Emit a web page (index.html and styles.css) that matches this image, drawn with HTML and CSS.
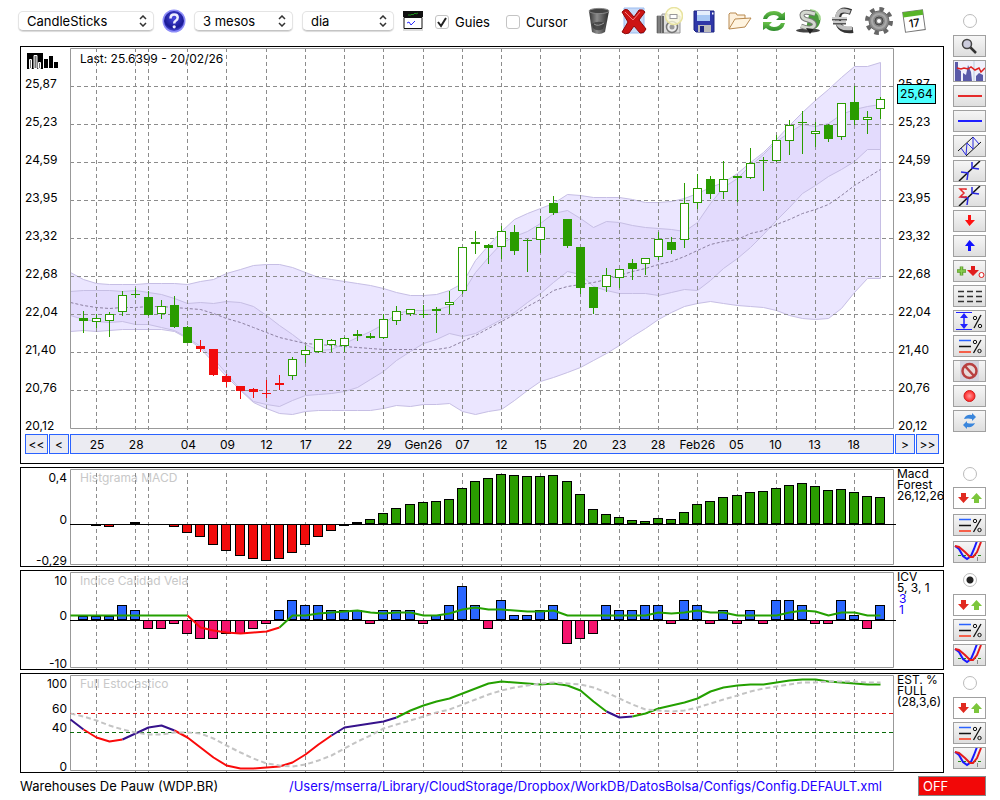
FILE: index.html
```html
<!DOCTYPE html>
<html lang="ca">
<head>
  <meta charset="UTF-8" />
  <meta name="viewport" content="width=device-width, initial-scale=1.0">
  <title>Warehouses De Pauw (WDP.BR)</title>
  <link rel="stylesheet" href="styles.css">
</head>
<body>
  <!-- Shared icons -->
  <svg class="defs" width="0" height="0" aria-hidden="true">
    <defs>
      <linearGradient id="metal" x1="0" x2="1"><stop offset="0" stop-color="#333"/><stop offset=".4" stop-color="#8c8c8c"/><stop offset="1" stop-color="#2a2a2a"/></linearGradient>
      <linearGradient id="leaf" x1="0" x2="0" y1="0" y2="1"><stop offset="0" stop-color="#6cc24a"/><stop offset="1" stop-color="#2c8a2c"/></linearGradient>
      <radialGradient id="ball" cx=".5" cy=".35" r=".7"><stop offset="0" stop-color="#4a4ae0"/><stop offset=".7" stop-color="#1a1a96"/><stop offset="1" stop-color="#5b5bf0"/></radialGradient>
      <radialGradient id="redball"><stop offset="0" stop-color="#ff9a9a"/><stop offset="1" stop-color="#f22"/></radialGradient>
      <symbol id="i-updown" viewBox="0 0 31 20">
        <rect width="31" height="20" fill="#fff"/>
        <path d="M7 5h5v4h3l-5.500 6L4 9h3z" fill="#e02a20"/>
        <path d="M20 15h5v-4h3l-5.500-6L17 11h3z" fill="#7cc63c"/>
      </symbol>
      <symbol id="i-percent" viewBox="0 0 31 20">
        <path d="M5 4.500h12" stroke="#2a62ff" stroke-width="1.500"/>
        <path d="M5 10.500h12" stroke="#111" stroke-width="1.500"/>
        <path d="M5 16h12" stroke="#f5604a" stroke-width="2"/>
        <path d="M27 4L19.500 17" stroke="#111" stroke-width="1.300"/>
        <circle cx="21" cy="6" r="1.700" fill="none" stroke="#111"/><circle cx="25.500" cy="15" r="1.700" fill="none" stroke="#111"/>
      </symbol>
      <symbol id="i-curves" viewBox="0 0 31 20">
        <path d="M4 13.500h25" stroke="#2c8a1c" stroke-dasharray="3 2"/>
        <path d="M23.500 15v4" stroke="#888"/>
        <path d="M1 4l4 3 4 7 4 3 4-3 3-7 3-8" fill="none" stroke="#1a1aff" stroke-width="2"/>
        <path d="M1 4l4 1 6 5 5 5h3l4-5 4-10" fill="none" stroke="#e51c1c" stroke-width="2"/>
      </symbol>
      <symbol id="i-cross" viewBox="0 0 31 20">
        <path d="M5 20L26 0" stroke="#111" stroke-width="1.500"/>
        <path d="M7 11l7 1-1 7M18 1v6l7 1" fill="none" stroke="#2a2ae0" stroke-width="1.500"/>
      </symbol>
    </defs>
  </svg>

  <div class="page">
    <header class="toolbar">
      <select class="pick pick-type" aria-label="Tipus"><option>CandleSticks</option></select>
      <button class="icon-button help" title="Ajuda">
        <svg viewBox="0 0 24 24"><circle cx="12" cy="12" r="11.500" fill="#8c8cf8"/><circle cx="12" cy="12" r="10" fill="url(#ball)"/><path d="M8.500 9.500q0-4 3.700-4 3.500 0 3.500 3 0 2-2 3.200-1.500.9-1.500 2.800" fill="none" stroke="#eef" stroke-width="2.500"/><circle cx="12.200" cy="17.800" r="1.600" fill="#eef"/></svg>
      </button>
      <select class="pick pick-range" aria-label="Rang"><option>3 mesos</option></select>
      <select class="pick pick-step" aria-label="Interval"><option>dia</option></select>
      <button class="icon-button mini" title="Indicadors">
        <svg viewBox="0 0 20 20"><path d="M0 0h20v6H0z" fill="#111"/><path d="M5 4h3l1-1 1 1 2-2 1 1 2-1" fill="none" stroke="#1c8a1c"/><path d="M1 6.500h18v11H1z" fill="#fff" stroke="#111"/><path d="M4 12l2-1 2 3 4-4" fill="none" stroke="#2a2aff"/><path d="M0 19h20" stroke="#bbb"/></svg>
      </button>
      <div class="checks">
        <label class="check"><input type="checkbox" checked>Guies</label>
        <label class="check"><input type="checkbox">Cursor</label>
      </div>
      <div class="actions">
        <button class="icon-button" title="Esborrar">
          <svg viewBox="0 0 28 28"><path d="M4 4l3 21q7 4 13 0l4-21z" fill="url(#metal)"/><ellipse cx="14" cy="4" rx="10" ry="2.600" fill="#444" stroke="#888"/><path d="M7 17q5-4 13-1l-2 6q-6 3-10-1z" fill="#333" opacity=".7"/><path d="M9 17q4 3 10-1" fill="none" stroke="#999"/></svg>
        </button>
        <button class="icon-button" title="Eliminar">
          <svg viewBox="0 0 28 28"><path d="M4 1h20v25H4z" fill="#c6daf8" stroke="#9bbcf0"/><path d="M2 5q3-4 6-2l6 7 5-7q4-1 6 2l-6 8 7 9q-2 5-6 4l-6-7-5 7q-4 2-7-1l6-10z" fill="#cc1414" stroke="#8e0808"/><path d="M5 5l8 8 7-8" fill="none" stroke="#f47a7a"/></svg>
        </button>
        <button class="icon-button" title="Captura">
          <svg viewBox="0 0 28 28"><path d="M2 9h5v-2h6v2h12v17H2z" fill="#ddd" stroke="#999"/><path d="M2 9h7v17H2z" fill="#666"/><path d="M4 9v17M6.500 9v17" stroke="#999"/><circle cx="17" cy="20" r="5.500" fill="#eee" stroke="#777" stroke-width="1.500"/><circle cx="17" cy="20" r="2.500" fill="#999"/><circle cx="19" cy="9" r="8.500" fill="#fffde0" fill-opacity=".75" stroke="#e8e3a0" stroke-width="1.500"/><rect x="15" y="7.500" width="7" height="4" fill="#fff" stroke="#999"/></svg>
        </button>
        <button class="icon-button" title="Desar">
          <svg viewBox="0 0 28 28"><path d="M4 4h20v21H6l-2-2z" fill="#2f37a8" stroke="#1c2480"/><path d="M7 4h13v10H7z" fill="#e4eefc"/><path d="M7 8h13v6H7z" fill="#a8c8f4"/><path d="M8 18h13v7H8z" fill="#bbb"/><path d="M10 19h4v6h-4z" fill="#1c2480"/><path d="M22 5.500h1.500v2H22z" fill="#fff"/></svg>
        </button>
        <button class="icon-button" title="Obrir">
          <svg viewBox="0 0 28 28"><path d="M4 22V7l1-1h6l1 2h8v4" fill="#fdf0dc" stroke="#b98a50"/><path d="M4 22l6-10 16-1-6 9z" fill="#fff4e0" stroke="#b98a50"/></svg>
        </button>
        <button class="icon-button" title="Refrescar">
          <svg viewBox="0 0 28 28"><path d="M3 12q2-8 11-8 5 0 8 3l3-2v8h-9l3-3q-2-2-5-2-5 0-7 4z" fill="url(#leaf)"/><path d="M25 16q-2 8-11 8-5 0-8-3l-3 2v-8h9l-3 3q2 2 5 2 5 0 7-4z" fill="url(#leaf)"/></svg>
        </button>
        <button class="icon-button" title="Dividends">
          <svg viewBox="0 0 28 28"><ellipse cx="13" cy="23.500" rx="12" ry="2" fill="#444"/><path d="M15 3a10 10 0 1 1-4 19z" fill="#4a9a3c"/><path d="M15 3q10 1 10 10" fill="none" stroke="#a4d890" stroke-width="2"/><path d="M20 7q-12-4-13 1 0 4 6 5 8 2 6 6-3 4-13 0" fill="none" stroke="#777" stroke-width="5"/><path d="M20 7q-12-4-13 1 0 4 6 5 8 2 6 6-3 4-13 0" fill="none" stroke="#d4d8d0" stroke-width="3"/><path d="M11 21l4 6 4-5" fill="#222"/></svg>
        </button>
        <button class="icon-button" title="Divisa">
          <svg viewBox="0 0 28 28"><path d="M21 5Q8 0 8 13q1 12 15 10" fill="none" stroke="#333" stroke-width="6"/><path d="M20 5Q7 0 7 12q0 11 15 9" fill="none" stroke="#c0c0c0" stroke-width="4"/><path d="M2 12h15M3 16h13" stroke="#555" stroke-width="3"/><path d="M2 11h15M3 15h13" stroke="#ccc" stroke-width="2"/></svg>
        </button>
        <button class="icon-button" title="Configuració">
          <svg viewBox="0 0 28 28"><circle cx="14" cy="14" r="12" fill="none" stroke="#666" stroke-width="4" stroke-dasharray="4.500 4.925"/><circle cx="14" cy="14" r="10" fill="#8a8a8a" stroke="#666"/><circle cx="14" cy="14" r="7" fill="none" stroke="#a8a8a8" stroke-width="2"/><circle cx="14" cy="14" r="4" fill="#777" stroke="#444"/><circle cx="14" cy="14" r="2" fill="#fff"/></svg>
        </button>
        <button class="icon-button" title="Calendari">
          <svg viewBox="0 0 28 28"><g transform="rotate(-8 14 14)"><path d="M4 4h20v20H4z" fill="#fff" stroke="#777"/><path d="M4 4h20v5H4z" fill="#58b428"/><text class="cal-day" x="14" y="20" text-anchor="middle">17</text></g></svg>
        </button>
      </div>
    </header>

    <aside class="tools tools-main">
      <input class="dot" type="radio" name="panel" aria-label="Gràfic">
      <button class="tool" title="Zoom"><svg viewBox="0 0 31 20"><path d="M16 11l6 6" stroke="#333" stroke-width="2.500"/><circle cx="13" cy="8" r="4.500" fill="#ccd" stroke="#444" stroke-width="1.500"/></svg></button>
      <button class="tool" title="Perfil"><svg viewBox="0 0 31 20"><path d="M0 0h31v20H0z" fill="#f0f0fb"/><path d="M1 20V1h3v7l3 2v10zM9 20V12l3 2 2-10 3 7 1 9zM22 20v-5l3-3 4 2v6z" fill="#5a5aa8"/><path d="M20 0v20" stroke="#bcd"/><path d="M3 7l4 1 3-1 4 1 3-2 4 3 4-2 2 4 4-4" fill="none" stroke="#e02020" stroke-width="1.500"/></svg></button>
      <button class="tool" title="Línia vermella"><svg viewBox="0 0 31 20"><path d="M4 10h24" stroke="#e52a2a" stroke-width="2"/></svg></button>
      <button class="tool" title="Línia blava"><svg viewBox="0 0 31 20"><path d="M4 10h24" stroke="#1f1fff" stroke-width="2"/></svg></button>
      <button class="tool" title="Canal"><svg viewBox="0 0 31 20"><path d="M4 15L19 1M12 20L27 6" stroke="#111"/><path d="M7 12l5 7 1-12 6 6 0-12 6 7" fill="none" stroke="#2a2ae0"/></svg></button>
      <button class="tool" title="Tendència"><svg><use href="#i-cross"/></svg></button>
      <button class="tool" title="Suma"><svg viewBox="0 0 31 20"><use href="#i-cross"/><path d="M12 4V3H6l4 4-4 4h6v-1" fill="none" stroke="#e52a2a" stroke-width="1.500"/></svg></button>
      <button class="tool" title="Vendre"><svg viewBox="0 0 31 20"><path d="M14 4h3v5h4l-5.500 6L11 9h3z" fill="#f11"/></svg></button>
      <button class="tool" title="Comprar"><svg viewBox="0 0 31 20"><path d="M14 15h3v-5h4l-5.500-6L11 10h3z" fill="#11f"/></svg></button>
      <button class="tool" title="Senyals"><svg viewBox="0 0 31 20"><path d="M3 10h9M7.500 5.500v9" stroke="#5a9a2a" stroke-width="3.500"/><path d="M3.500 10h8M7.500 6v8" stroke="#8ccf50" stroke-width="1.500"/><path d="M17 5h4v4h4l-6 6-6-6h4z" fill="#e01c1c"/><circle cx="27.500" cy="14" r="2.500" fill="#fff" stroke="#e01c1c"/></svg></button>
      <button class="tool" title="Guions"><svg viewBox="0 0 31 20"><path d="M4 5.500h24M4 10.500h24M4 15.500h24" stroke="#333" stroke-width="1.500" stroke-dasharray="6 3"/></svg></button>
      <button class="tool" title="Rang %"><svg viewBox="0 0 31 20"><path d="M2 1.500h16M2 18.500h16" stroke="#22f"/><path d="M10 3v14" stroke="#22f" stroke-width="1.500"/><path d="M10 2l4 5H6zM10 18l4-5H6z" fill="#22f"/><path d="M27 4L20 17" stroke="#111" stroke-width="1.300"/><circle cx="21" cy="7" r="1.700" fill="none" stroke="#111"/><circle cx="26" cy="15" r="1.700" fill="none" stroke="#111"/></svg></button>
      <button class="tool" title="Línies %"><svg><use href="#i-percent"/></svg></button>
      <button class="tool" title="Prohibit"><svg viewBox="0 0 31 20"><path d="M6 0h19v20H6z" fill="#d4d4de"/><circle cx="15.500" cy="10" r="7" fill="#e8d8d8" stroke="#b84040" stroke-width="2.500"/><path d="M11 5l9 10" stroke="#b84040" stroke-width="2.500"/></svg></button>
      <button class="tool" title="Gravar"><svg viewBox="0 0 31 20"><circle cx="15.500" cy="10" r="5.500" fill="url(#redball)" stroke="#c22"/></svg></button>
      <button class="tool" title="Actualitzar"><svg viewBox="0 0 31 20"><path d="M10 8q2-5 8-4V2l4 4-4 4V8q-4-1-8 0zM21 12q-2 5-8 4v2l-4-4 4-4v2q4 1 8 0z" fill="#3a86dc"/></svg></button>
    </aside>

    <section class="panel panel-price">
      <div class="scale scale-price">
        <svg class="logo" viewBox="0 0 32 16"><path d="M0 0h16v16H0z"/><path d="M2.500 6.500h2v9h-2zM7 2.500h3v13H7zM11.500 9.500h2v6h-2z" fill="#777" stroke="#fff"/><path d="M17 6h4v9h-4zM22 3h4v12h-4zM27 9h4v6h-4z"/></svg>
        <span>25,87</span><span>25,23</span><span>24,59</span><span>23,95</span><span>23,32</span>
        <span>22,68</span><span>22,04</span><span>21,40</span><span>20,76</span><span>20,12</span>
      </div>
      <div class="plot">
        <p class="plot-title last">Last: 25.6399 - 20/02/26</p>
        <svg id="price" class="chart chart-price" viewBox="0 48 824 381" preserveAspectRatio="none"></svg>
      </div>
      <div class="scale scale-price scale-right">
        <div class="logo"></div>
        <span>25,87</span><span>25,23</span><span>24,59</span><span>23,95</span><span>23,32</span>
        <span>22,68</span><span>22,04</span><span>21,40</span><span>20,76</span><span>20,12</span>
        <strong class="price-tag">25,64</strong>
      </div>
      <div class="pager pager-left">
        <button class="page-all">&lt;&lt;</button>
        <button class="page-one">&lt;</button>
      </div>
      <div class="dates" id="dates"></div>
      <div class="pager pager-right">
        <button class="page-one">&gt;</button>
        <button class="page-all">&gt;&gt;</button>
      </div>
    </section>

    <section class="panel">
      <div class="scale scale-macd"><span>0,4</span><span>0</span><span>-0,29</span></div>
      <div class="plot">
        <p class="plot-title">Histgrama MACD</p>
        <svg id="macd" class="chart" viewBox="0 468 824 98" preserveAspectRatio="none"></svg>
      </div>
      <div class="legend">Macd<br>Forest<br>26,12,26</div>
    </section>
    <aside class="tools tools-macd">
      <input class="dot" type="radio" name="panel" aria-label="MACD">
      <button class="tool" title="Moure"><svg><use href="#i-updown"/></svg></button>
      <button class="tool" title="Línies %"><svg><use href="#i-percent"/></svg></button>
      <button class="tool" title="Indicador"><svg><use href="#i-curves"/></svg></button>
    </aside>

    <section class="panel">
      <div class="scale scale-icv"><span>10</span><span>0</span><span>-10</span></div>
      <div class="plot">
        <p class="plot-title">Indice Calidad Vela</p>
        <svg id="icv" class="chart" viewBox="0 571 824 98" preserveAspectRatio="none"></svg>
      </div>
      <div class="legend">ICV<br>5, 3, 1<div class="legend-blue">3<br>1</div></div>
    </section>
    <aside class="tools">
      <input class="dot" type="radio" name="panel" aria-label="ICV" checked>
      <button class="tool" title="Moure"><svg><use href="#i-updown"/></svg></button>
      <button class="tool" title="Línies %"><svg><use href="#i-percent"/></svg></button>
      <button class="tool" title="Indicador"><svg><use href="#i-curves"/></svg></button>
    </aside>

    <section class="panel">
      <div class="scale scale-est"><span>100</span><span>60</span><span>40</span><span>0</span></div>
      <div class="plot">
        <p class="plot-title">Full Estocastico</p>
        <svg id="est" class="chart" viewBox="0 674 824 98" preserveAspectRatio="none"></svg>
      </div>
      <div class="legend">EST. %<br>FULL<br>(28,3,6)</div>
    </section>
    <aside class="tools">
      <input class="dot" type="radio" name="panel" aria-label="Estocastico">
      <button class="tool" title="Moure"><svg><use href="#i-updown"/></svg></button>
      <button class="tool" title="Línies %"><svg><use href="#i-percent"/></svg></button>
      <button class="tool" title="Indicador"><svg><use href="#i-curves"/></svg></button>
    </aside>

    <footer class="status">
      <span>Warehouses De Pauw (WDP.BR)</span>
      <a href="#">/Users/mserra/Library/CloudStorage/Dropbox/WorkDB/DatosBolsa/Configs/Config.DEFAULT.xml</a>
      <button class="power">OFF</button>
    </footer>
  </div>

  <script src="charts.js"></script>
</body>
</html>
```
FILE: styles.css
```css
* {
  box-sizing: border-box;
  margin: 0;
  padding: 0;
}

body {
  font-family: Inter, "Liberation Sans", sans-serif;
  font-size: 12px;
  color: #000;
  background-color: #fff;
}

button,
select {
  font: inherit;
  color: inherit;
}

.defs {
  position: absolute;
}

.page {
  display: grid;
  grid-template-columns: minmax(0, 1fr) 33px;
  column-gap: 9px;
  padding: 0 14px 0 18px;
}

/* Toolbar */
.toolbar {
  display: flex;
  align-items: center;
  gap: 9px;
  height: 46px;
  padding-bottom: 4px;
  padding-right: 16px;
  font-size: 13px;
}

.pick {
  appearance: none;
  height: 20px;
  padding: 0 20px 0 8px;
  border: 1px solid #e4e4e4;
  border-bottom-color: #c4c4c4;
  border-radius: 5px;
  box-shadow: 0 1px 1px rgba(0, 0, 0, 0.15);
  background: #fff url("data:image/svg+xml,%3Csvg xmlns='http://www.w3.org/2000/svg' width='8' height='12'%3E%3Cpath d='M1 4l3-3 3 3M1 8l3 3 3-3' fill='none' stroke='%23333' stroke-width='1.500'/%3E%3C/svg%3E") no-repeat right 6px center;
}

.pick-type { width: 136px; }
.pick-range { width: 99px; }
.pick-step { width: 92px; }

.icon-button {
  width: 28px;
  height: 28px;
  border: none;
  background: none;
  cursor: pointer;
}

.icon-button svg {
  display: block;
  width: 100%;
  height: 100%;
}

.help {
  width: 24px;
  height: 24px;
  margin: 0 -1px;
}

.mini {
  width: 20px;
  height: 20px;
}

.checks {
  display: flex;
  gap: 16px;
  margin-left: 3px;
}

.check {
  display: flex;
  align-items: center;
  gap: 6px;
  padding-top: 2px;
}

.check input {
  appearance: none;
  width: 14px;
  height: 14px;
  border: 1px solid #c4c4c4;
  border-radius: 3px;
  background-color: #fff;
}

.check input:checked {
  background: #fff url("data:image/svg+xml,%3Csvg xmlns='http://www.w3.org/2000/svg' width='12' height='12'%3E%3Cpath d='M2 6l3 4 5-8' fill='none' stroke='%23222' stroke-width='2'/%3E%3C/svg%3E") no-repeat center;
}

.actions {
  display: flex;
  gap: 7px;
  margin-left: auto;
}

.cal-day {
  font-size: 11px;
  font-weight: 500;
}

/* Right hand tools */
.tools {
  display: flex;
  flex-direction: column;
  gap: 3px;
  padding-top: 3px;
}

.tools-main {
  grid-column: 2;
  grid-row: 1 / 3;
  padding-top: 14px;
}

.tools-macd {
  gap: 5px;
  padding-top: 0;
}

.dot {
  appearance: none;
  flex-shrink: 0;
  align-self: center;
  width: 14px;
  height: 14px;
  margin-bottom: 4px;
  border: 1px solid #bbb;
  border-radius: 50%;
}

.tools-macd .dot {
  margin-bottom: 1px;
}

.dot:checked {
  background: radial-gradient(circle, #222 0 3px, #fff 4px);
}

.tool {
  height: 22px;
  border: 1px solid #a0a0a0;
  background: linear-gradient(#f6f6f6, #dedede);
  cursor: pointer;
}

.tool svg {
  display: block;
  width: 31px;
  height: 20px;
}

/* Chart panels */
.panel {
  display: grid;
  grid-column: 1;
  grid-template-columns: 49px minmax(0, 1fr) 49px;
  height: 100px;
  margin: 0 0 3px 2px;
  border: 1px solid #000;
}

.panel-price {
  grid-template-rows: 387px 20px;
  height: 418px;
}

.plot {
  position: relative;
}

.plot-title {
  position: absolute;
  top: 3px;
  left: 10px;
  line-height: 14px;
  color: #c8c8c8;
}

.last {
  top: 5px;
  color: #000;
}

.chart {
  display: block;
  position: relative;
  width: 100%;
  height: 98px;
  overflow: visible;
}

.chart-price {
  height: 381px;
  margin-top: 1px;
}

.scale {
  display: grid;
  padding-right: 3px;
  text-align: right;
  line-height: 10px;
}

.scale span {
  align-self: end;
}

.scale-macd { grid-template-rows: 15px 42px 41px; }
.scale-icv { grid-template-rows: 15px 35px 48px; }
.scale-est { grid-template-rows: 15px 25px 19px 39px; }

.scale-price {
  position: relative;
  display: flex;
  flex-direction: column;
  gap: 26px;
  padding-left: 4px;
  text-align: left;
  line-height: 12px;
}

.scale-price span {
  align-self: flex-start;
}

.logo {
  width: 32px;
  height: 16px;
  margin: 6px 0 -17px 2px;
  flex-shrink: 0;
}

.price-tag {
  position: absolute;
  top: 37px;
  left: 3px;
  padding: 0 2px;
  border: 1px solid #000;
  background-color: #4dffff;
  font-weight: 400;
  line-height: 18px;
}

.legend {
  padding-left: 3px;
  line-height: 11px;
  overflow: hidden;
}

.legend-blue {
  padding-left: 2px;
  color: #1a00ff;
}

/* Date navigation */
.pager {
  display: flex;
  gap: 1px;
}

.pager-left {
  justify-content: flex-end;
  padding-right: 1px;
}

.pager-right {
  padding-left: 1px;
}

.pager button {
  border: 1px solid #2a62ff;
  background-color: #ebebf2;
}

.page-all { width: 23px; }
.page-one { width: 20px; }

.dates {
  display: grid;
  grid-template-columns: repeat(63, minmax(0, 1fr));
  border: 1px solid #2a62ff;
  background-color: #ebebf2;
  line-height: 19px;
}

.dates span {
  grid-row: 1;
  justify-self: center;
}

/* Chart strokes */
.frame { fill: none; stroke: #999; }
.guide { fill: none; stroke: #8c8c8c; stroke-dasharray: 4 3; }
.axis { stroke: #000; }
.band-outer { fill: #ebe6ff; stroke: #c6bee4; }
.band-inner { fill: #e3dbfd; stroke: #c6bee4; }
.band-middle { fill: none; stroke: #8c80a0; stroke-dasharray: 3 2; }
.up { fill: #fff; stroke: #2a9c00; }
.down { fill: #2a9c00; stroke: #2a9c00; }
.fall { fill: #f20c0c; stroke: #f20c0c; }
.bar { stroke: #000; }
.bar-green { fill: #2a9c00; }
.bar-red { fill: #f20c0c; }
.bar-blue { fill: #2a66ff; }
.bar-pink { fill: #f5146e; }
.line { fill: none; stroke-width: 2; stroke-linejoin: round; }
.line-green { stroke: #24a000; }
.line-red { stroke: #fa0a0a; }
.line-purple { stroke: #36128c; }
.line-slow { stroke: #c4c4c4; stroke-dasharray: 5 3; }
.level-red { stroke: #d81010; stroke-dasharray: 4 3; }
.level-green { stroke: #0a6a0a; stroke-dasharray: 4 3; }

/* Footer */
.status {
  grid-column: 1 / 3;
  display: flex;
  align-items: center;
  height: 20px;
  padding-left: 2px;
  font-size: 13px;
}

.status a {
  margin-left: auto;
  margin-right: 36px;
  color: #2200ff;
  text-decoration: none;
}

.power {
  width: 68px;
  height: 20px;
  padding-left: 4px;
  border: 1px solid #888;
  background-color: #f20808;
  color: #fff;
  text-align: left;
}
```
FILE: charts.js
```js
const NS = "http://www.w3.org/2000/svg";
const SLOTS = 63;
const WIDTH = 824;

// centre of the column of one session
function X(i) {
  return Math.floor(WIDTH / SLOTS * i) + 0.5;
}

function add(svg, tag, attrs) {
  const el = document.createElementNS(NS, tag);
  for (const key in attrs) el.setAttribute(key, attrs[key]);
  svg.appendChild(el);
  return el;
}

function points(ys, from = 0, to = ys.length - 1) {
  const list = [];
  for (let i = from; i <= to; i++) list.push(X(i) + "," + (ys[i] + 0.5));
  return list.join(" ");
}

const dates = [[2, "25"], [5, "28"], [9, "04"], [12, "09"], [15, "12"], [18, "17"], [21, "22"],
  [24, "29"], [27, "Gen26"], [30, "07"], [33, "12"], [36, "15"], [39, "20"], [42, "23"],
  [45, "28"], [48, "Feb26"], [51, "05"], [54, "10"], [57, "13"], [60, "18"]];

const dateBar = document.getElementById("dates");
for (const [i, text] of dates) {
  const span = document.createElement("span");
  span.textContent = text;
  span.style.gridColumn = `${i - 1} / ${i + 3}`;
  dateBar.appendChild(span);
}

function guides(svg, top, bottom) {
  const cols = dates.map(d => d[0]).concat(6);
  for (const i of cols) {
    add(svg, "path", { class: "guide", d: `M${X(i)} ${top}V${bottom}` });
  }
}

function frame(svg, top, bottom) {
  add(svg, "path", { class: "frame", d: `M0.5 ${top}.5H823.5V${bottom}.5H0.5z` });
}

// ---- Price ----
const outerTop = [272, 279, 283, 284, 284, 284, 283, 283, 283, 284, 281, 279, 273, 269, 265, 264, 264, 267, 272, 277, 279,
  281, 283, 285, 288, 292, 295, 295, 294, 290, 283, 260, 245, 231, 219, 213, 208, 203, 194, 195, 197,
  197, 197, 199, 202, 202, 201, 198, 193, 187, 182, 173, 162, 152, 139, 125, 112, 100, 89, 77, 66, 66, 62];
const innerTop = [291, 290, 290, 290, 291, 290, 292, 294, 298, 303, 302, 303, 301, 302, 306, 315, 325, 334, 344, 350, 349,
  343, 337, 331, 324, 313, 310, 310, 309, 306, 293, 272, 257, 243, 236, 231, 223, 213, 210, 218, 227,
  221, 222, 225, 227, 228, 229, 231, 222, 203, 187, 178, 165, 154, 141, 132, 124, 126, 123, 114, 109, 106, 104];
const middle = [302, 305, 307, 308, 307, 307, 306, 306, 307, 308, 309, 313, 318, 322, 327, 332, 337, 340, 343, 344, 345,
  346, 347, 348, 349, 349, 349, 349, 349, 347, 341, 335, 328, 321, 314, 306, 299, 290, 286, 284, 282,
  279, 275, 271, 268, 264, 261, 256, 250, 244, 241, 239, 233, 230, 224, 219, 213, 209, 204, 195, 185, 177, 169];
const innerLow = [315, 319, 321, 322, 321, 324, 324, 327, 330, 337, 346, 358, 373, 389, 401, 404, 406, 400, 395, 394, 393,
  391, 387, 379, 371, 360, 351, 343, 339, 333, 336, 333, 326, 319, 312, 302, 293, 282, 271, 274, 286,
  290, 293, 293, 293, 295, 292, 289, 290, 280, 268, 258, 247, 234, 220, 207, 193, 185, 176, 169, 161, 149, 149];
const outerLow = [331, 330, 331, 330, 329, 329, 329, 329, 331, 338, 348, 362, 376, 390, 402, 408, 413, 414, 411, 410, 410,
  410, 410, 410, 408, 405, 406, 404, 404, 403, 411, 414, 411, 409, 400, 390, 381, 377, 372, 367, 360,
  353, 345, 336, 328, 319, 312, 306, 303, 301, 303, 305, 306, 307, 310, 315, 318, 319, 318, 308, 292, 278, 278];

// high, body top, body bottom, low, kind (u = hollow, d = filled, f = red)
const candles = [
  [311, 318, 320, 333, "d"], [314, 318, 321, 328, "u"], [312, 314, 320, 337, "u"], [291, 295, 311, 316, "u"],
  [288, 294, 294, 298, "d"], [291, 297, 314, 316, "d"], [300, 306, 313, 319, "u"], [296, 305, 326, 328, "d"],
  [326, 327, 342, 343, "d"], [340, 346, 348, 352, "f"], [349, 349, 374, 376, "f"], [374, 376, 381, 387, "f"],
  [386, 386, 390, 399, "f"], [388, 389, 391, 398, "f"], [380, 393, 393, 398, "f"], [375, 383, 384, 390, "f"],
  [357, 359, 375, 380, "u"], [346, 350, 354, 363, "u"], [339, 339, 351, 353, "u"], [339, 340, 344, 352, "u"],
  [337, 338, 345, 352, "u"], [330, 334, 335, 341, "d"], [333, 336, 337, 339, "d"], [314, 319, 337, 339, "u"],
  [306, 311, 320, 325, "u"], [309, 309, 313, 316, "u"], [305, 314, 314, 318, "d"], [307, 309, 310, 333, "d"],
  [291, 302, 304, 314, "u"], [247, 247, 290, 294, "u"], [231, 242, 243, 254, "d"], [244, 245, 247, 264, "d"],
  [226, 231, 246, 259, "u"], [225, 232, 250, 255, "d"], [239, 240, 240, 272, "d"], [216, 227, 239, 253, "u"],
  [196, 203, 212, 215, "d"], [219, 219, 245, 248, "d"], [247, 247, 287, 294, "d"], [287, 287, 307, 314, "d"],
  [268, 275, 286, 292, "u"], [269, 269, 277, 288, "u"], [259, 263, 268, 280, "d"], [258, 258, 263, 275, "u"],
  [232, 239, 256, 260, "u"], [237, 242, 249, 254, "d"], [183, 203, 239, 248, "u"], [174, 188, 202, 209, "u"],
  [176, 179, 193, 199, "d"], [161, 179, 191, 199, "u"], [176, 176, 177, 202, "d"], [148, 163, 177, 179, "u"],
  [157, 160, 160, 191, "d"], [135, 140, 160, 162, "u"], [120, 125, 140, 155, "u"], [111, 122, 122, 154, "d"],
  [122, 131, 133, 147, "u"], [124, 125, 138, 142, "d"], [103, 103, 136, 140, "u"], [86, 102, 119, 125, "d"],
  [111, 117, 119, 134, "u"], [97, 99, 108, 119, "u"]
];

function band(svg, name, top, low) {
  const back = points(low).split(" ").reverse().join(" ");
  add(svg, "polygon", { class: name, points: points(top) + " " + back });
}

const price = document.getElementById("price");
band(price, "band-outer", outerTop, outerLow);
band(price, "band-inner", innerTop, innerLow);
add(price, "polyline", { class: "band-middle", points: points(middle) });
guides(price, 48, 430);
for (let y = 86; y < 428; y += 38) {
  add(price, "path", { class: "guide", d: `M0 ${y}.5H826` });
}
frame(price, 48, 428);

const kinds = { u: "up", d: "down", f: "fall" };
candles.forEach(([high, top, bottom, low, kind], n) => {
  const x = X(n + 1);
  add(price, "path", { class: kinds[kind], d: `M${x} ${high}V${low}` });
  if (top === bottom) {
    add(price, "path", { class: kinds[kind], d: `M${x - 4.5} ${top}.5h9` });
  } else {
    add(price, "rect", { class: kinds[kind], x: x - 4, y: top + 0.5, width: 8, height: bottom - top });
  }
});

// ---- Histograms ----
function bars(svg, values, base, plus, minus) {
  values.forEach((v, i) => {
    if (!v) return;
    add(svg, "rect", {
      class: "bar " + (v > 0 ? plus : minus),
      x: X(i) - 5,
      y: v > 0 ? base + 0.5 - v : base + 0.5,
      width: 9,
      height: v > 0 ? v - 1 : -v
    });
  });
  add(svg, "path", { class: "axis", d: `M0 ${base}.5H826` });
}

const macdValues = [0, 0, -1, -2, 0, 2, 0, 0, -2, -8, -12, -20, -26, -31, -34, -36, -34, -28, -20, -12, -6,
  -1, 2, 5, 11, 16, 20, 22, 23, 25, 36, 43, 46, 50, 49, 48, 48, 49, 43, 30, 15,
  10, 7, 4, 3, 6, 5, 12, 20, 23, 27, 29, 32, 33, 36, 39, 41, 38, 34, 35, 32, 28, 27];

const macd = document.getElementById("macd");
guides(macd, 473, 566);
frame(macd, 469, 564);
bars(macd, macdValues, 524, "bar-green", "bar-red");

const icvValues = [0, 4, 4, 4, 15, 10, -8, -8, -3, -13, -18, -18, -13, -13, -8, -3, 10, 20, 15, 15, 10,
  10, 10, -3, 10, 10, 10, -3, 5, 15, 34, 15, -8, 20, 5, 5, 10, 15, -23, -18, -13,
  15, 10, 10, 15, 15, -3, 20, 15, -3, 10, -3, 10, -3, 20, 20, 15, -3, -3, 20, 5, -8, 15];
const icvLine = [615, 615, 615, 615, 615, 615, 615, 615, 615, 615, 627, 630, 632, 633, 632, 631, 627, 615, 615, 613, 612,
  611, 610, 612, 613, 612, 612, 615, 615, 613, 609, 607, 609, 609, 610, 611, 611, 610, 615, 615, 615,
  615, 615, 615, 615, 612, 613, 612, 610, 612, 612, 615, 615, 615, 615, 612, 610, 611, 615, 612, 612, 615, 615];

const icv = document.getElementById("icv");
guides(icv, 576, 669);
frame(icv, 572, 667);
bars(icv, icvValues, 620, "bar-blue", "bar-pink");
add(icv, "polyline", { class: "line line-green", points: points(icvLine, 0, 9) });
add(icv, "polyline", { class: "line line-red", points: points(icvLine, 9, 16) });
add(icv, "polyline", { class: "line line-green", points: points(icvLine, 16) });

// ---- Stochastic ----
const fast = [719, 729, 737, 741, 739, 733, 727, 725, 730, 737, 747, 757, 765, 768, 768, 767, 766, 762, 754, 744, 735,
  727, 725, 723, 721, 717, 710, 705, 701, 698, 693, 688, 683, 681, 682, 683, 684, 683, 685, 690, 701,
  711, 717, 716, 713, 708, 705, 702, 698, 691, 687, 685, 684, 684, 682, 680, 679, 679, 681, 682, 683, 684, 684];
const slow = [713, 716, 720, 725, 729, 732, 734, 734, 732, 732, 733, 738, 745, 752, 758, 763, 765, 766, 764, 760, 755,
  748, 741, 735, 728, 724, 720, 716, 712, 709, 704, 699, 694, 690, 687, 685, 683, 682, 683, 684, 687,
  692, 698, 704, 709, 710, 711, 710, 707, 703, 699, 695, 691, 688, 686, 684, 682, 682, 681, 681, 681, 682, 682];
const runs = [["purple", 0, 1], ["red", 1, 4], ["purple", 4, 8], ["red", 8, 20], ["purple", 20, 25],
  ["green", 25, 41], ["purple", 41, 43], ["green", 43, 62]];

const est = document.getElementById("est");
guides(est, 679, 772);
frame(est, 675, 770);
add(est, "path", { class: "level-red", d: "M0 713.5H826" });
add(est, "path", { class: "level-green", d: "M0 732.5H826" });
for (const [color, from, to] of runs) {
  add(est, "polyline", { class: "line line-" + color, points: points(fast, from, to) });
}
add(est, "polyline", { class: "line line-slow", points: points(slow) });
```
